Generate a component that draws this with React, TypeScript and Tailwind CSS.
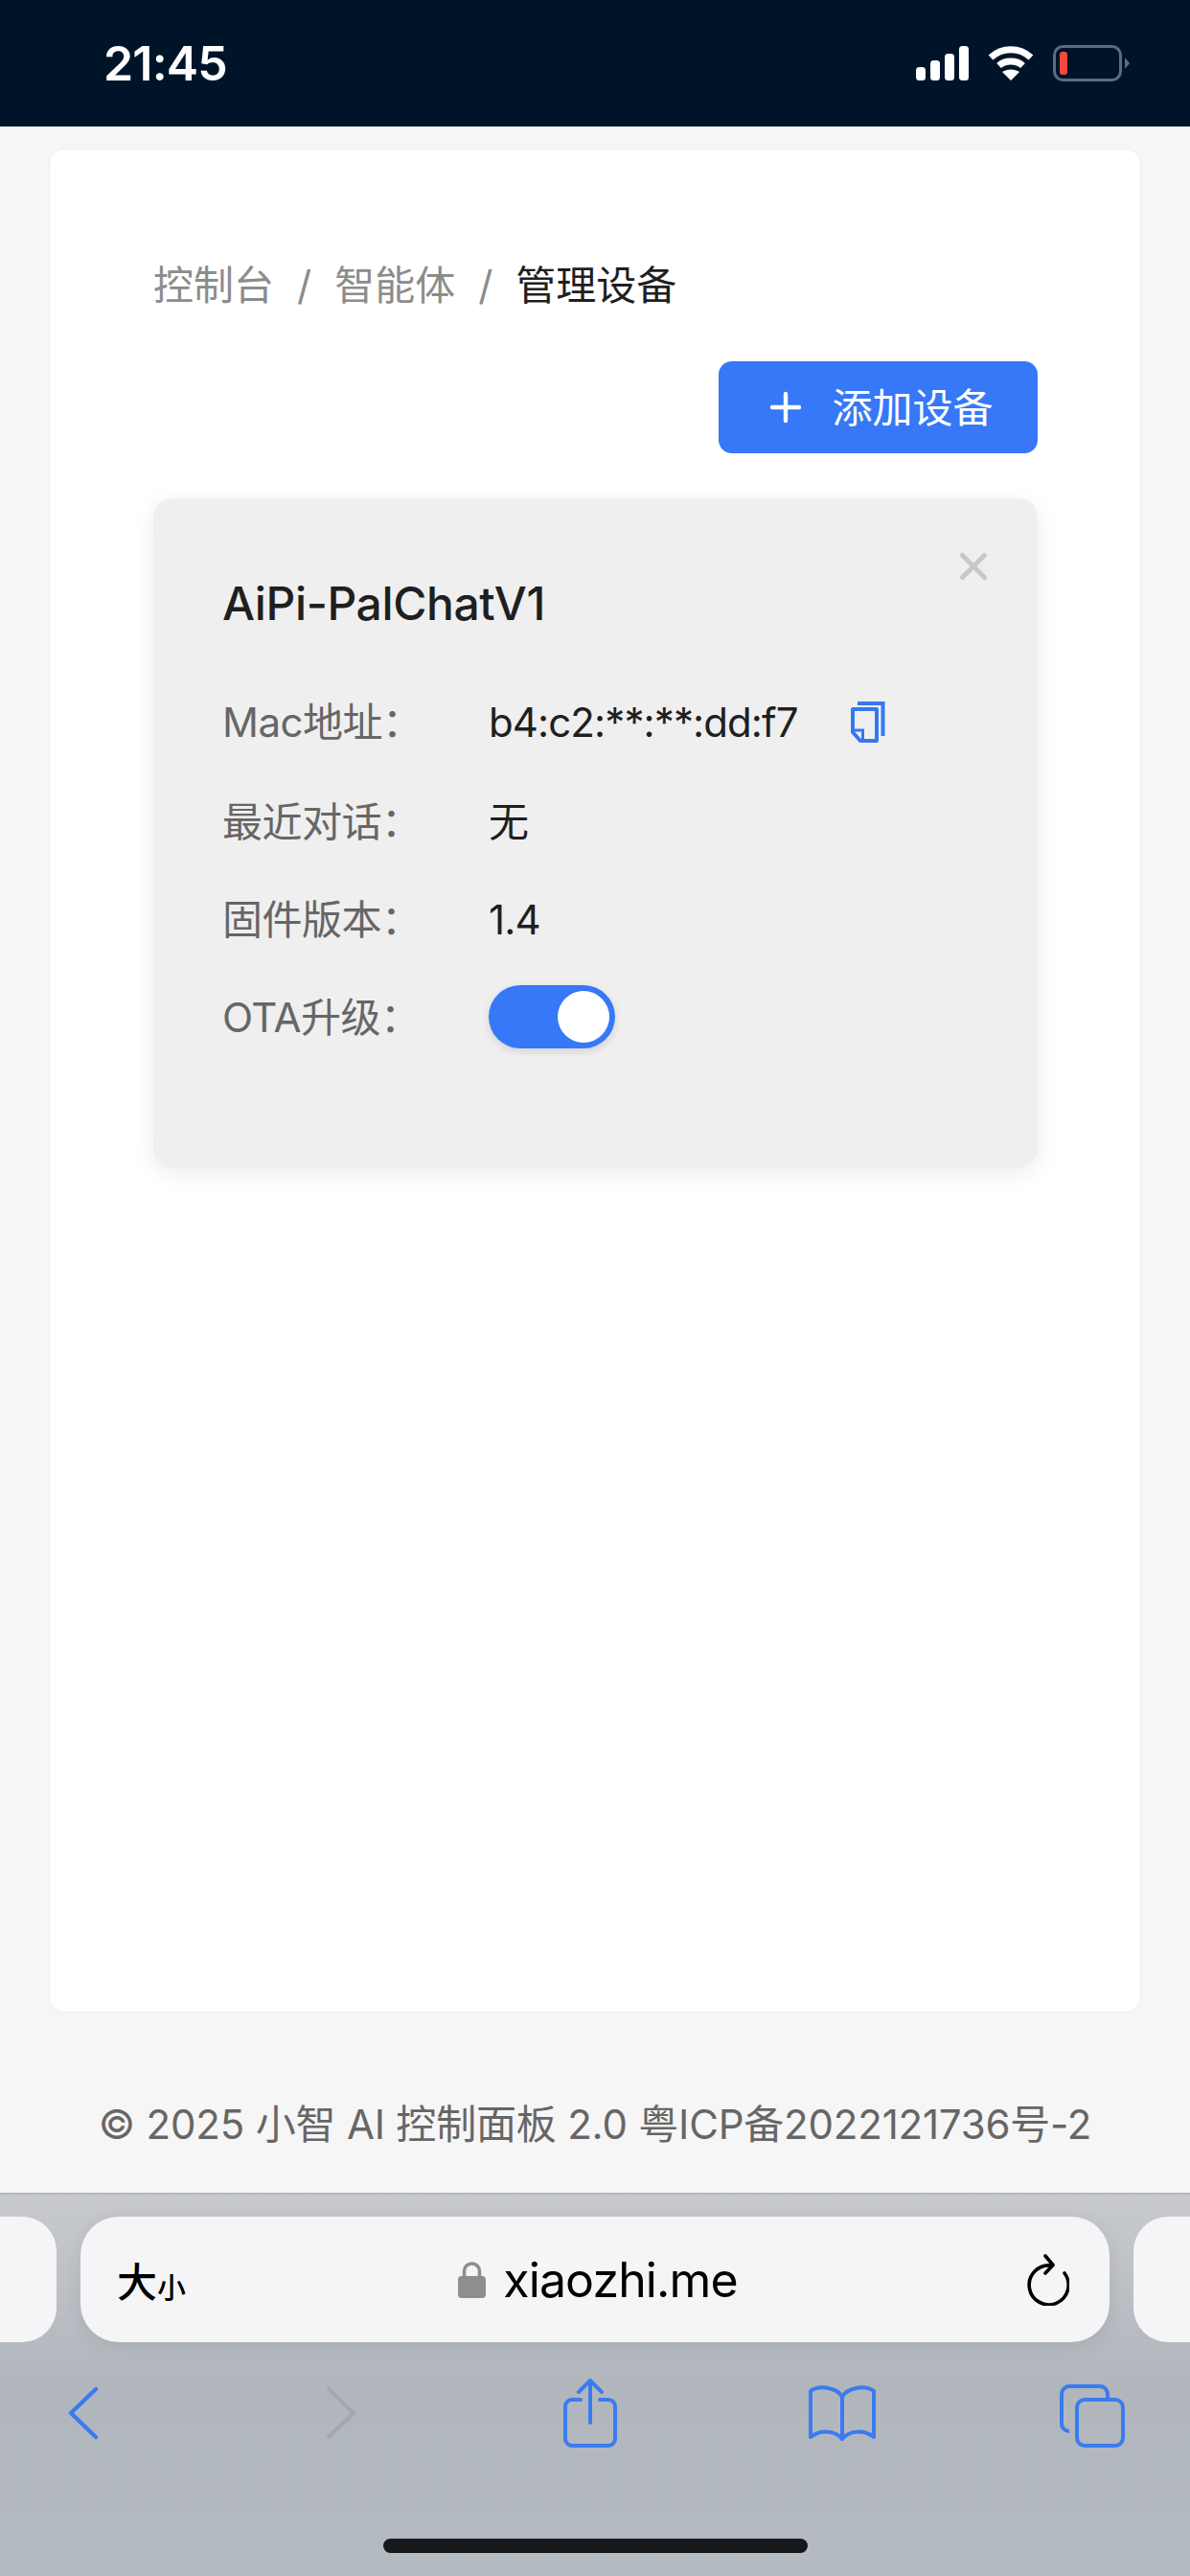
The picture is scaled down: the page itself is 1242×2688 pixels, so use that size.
import { Plus, X } from 'lucide-react';

const FONT = 'font-["Inter","Noto_Sans_CJK_SC",sans-serif]';

// Status bar glyphs
const SignalIcon = () => (
  <svg width="55" height="36" viewBox="0 0 55 36" fill="#fff">
    <rect x="0" y="22" width="10" height="14" rx="3.5" />
    <rect x="15" y="15" width="10" height="21" rx="3.5" />
    <rect x="30" y="8" width="10" height="28" rx="3.5" />
    <rect x="45" y="0" width="10" height="36" rx="3.5" />
  </svg>
);

const WifiIcon = () => (
  <svg width="48" height="36" viewBox="0 0 48 36" fill="none" stroke="#fff" strokeWidth="7">
    <path d="M3 12 C15 1 33 1 45 12" />
    <path d="M11.5 20.5 C18 14.5 30 14.5 36.5 20.5" />
    <path d="M24 36 L15 27 C20 23.5 28 23.5 33 27 Z" fill="#fff" stroke="none" />
  </svg>
);

const BatteryIcon = () => (
  <svg width="80" height="38" viewBox="0 0 80 38" fill="none">
    <rect x="1.5" y="1.5" width="69" height="35" rx="9" stroke="#5c6b80" strokeWidth="3" />
    <rect x="7" y="7" width="8" height="24" rx="3" fill="#ef4a3f" />
    <path d="M75 13 L80 19 L75 25 Z" fill="#5c6b80" />
  </svg>
);

const CopyIcon = () => (
  <svg width="36" height="43" viewBox="0 0 36 43" fill="none" stroke="#3678f0" strokeWidth="4">
    <path d="M7 2 H33.5 V36" />
    <path d="M2 8 H27 V41 H10 L2 32 Z" strokeLinejoin="round" />
    <path d="M2 30 H12.5 V40" strokeWidth="3" />
  </svg>
);

const ReloadIcon = () => (
  <svg width="46" height="54" viewBox="0 0 46 54" fill="none" stroke="#000" strokeWidth="3.6" strokeLinecap="round" strokeLinejoin="round">
    <path d="M27 12 A20.5 20.5 0 1 0 41 20" />
    <path d="M21 2 L29 11.5 L21 20" />
  </svg>
);

const LockIcon = () => (
  <svg width="33" height="38" viewBox="0 0 33 38">
    <path d="M8.5 17 V10 A8 8 0 0 1 24.5 10 V17" fill="none" stroke="#8e8e90" strokeWidth="3.6" />
    <rect x="2" y="15" width="29" height="23" rx="4" fill="#8e8e90" />
  </svg>
);

const ChevronIcon = ({ flip, color }: { flip?: boolean; color: string }) => (
  <svg width="32" height="56" viewBox="0 0 32 56" fill="none" className={flip ? 'rotate-180' : ''}>
    <path d="M29 3 L3 28 L29 53" stroke={color} strokeWidth="4.4" strokeLinecap="round" strokeLinejoin="round" />
  </svg>
);

const ShareIcon = () => (
  <svg width="56" height="72" viewBox="0 0 56 72" fill="none" stroke="#3a7bf0" strokeWidth="4" strokeLinecap="round" strokeLinejoin="round">
    <path d="M18 22 H9 A7 7 0 0 0 2 29 V63 A7 7 0 0 0 9 70 H47 A7 7 0 0 0 54 63 V29 A7 7 0 0 0 47 22 H38" />
    <path d="M28 46 V3" />
    <path d="M16 14 L28 2 L40 14" />
  </svg>
);

const BookIcon = () => (
  <svg width="70" height="58" viewBox="0 0 70 58" fill="none" stroke="#3a7bf0" strokeWidth="4" strokeLinecap="round" strokeLinejoin="round">
    <path d="M35 12 C30 3 12 -1 2 6 V54 C12 46 28 47 35 56 C42 47 58 46 68 54 V6 C58 -1 40 3 35 12 Z" />
    <path d="M35 12 V56" />
  </svg>
);

const TabsIcon = () => (
  <svg width="68" height="66" viewBox="0 0 68 66" fill="none" stroke="#3a7bf0" strokeWidth="4" strokeLinejoin="round">
    <path d="M10 49 A8 8 0 0 1 2 41 V10 A8 8 0 0 1 10 2 H42 A8 8 0 0 1 50 10 V16" />
    <rect x="18" y="16" width="48" height="48" rx="8" />
  </svg>
);

const DETAIL_ROWS = [
  { label: 'Mac地址：', value: 'b4:c2:**:**:dd:f7', height: 'h-[106px]' },
  { label: '最近对话：', value: '无', height: 'h-[102px]' },
  { label: '固件版本：', value: '1.4', height: 'h-[102px]' },
];

export default function App() {
  return (
    <div className={`${FONT} flex h-[2688px] w-[1242px] flex-col overflow-hidden bg-[#f6f6f6]`}>
      {/* Status bar */}
      <div className="flex h-[132px] shrink-0 items-center justify-between bg-[#001429] pl-[108px] pr-[63px]">
        <span className="text-[50px] font-semibold tracking-[-0.8px] text-white">21:45</span>
        <div className="flex items-center gap-5">
          <SignalIcon />
          <WifiIcon />
          <BatteryIcon />
        </div>
      </div>

      {/* Panel */}
      <div className="flex-1 px-[51px] pt-[23px]">
        <div className="h-[1945px] rounded-2xl border border-[#f0f0f0] bg-white pl-[108px] pr-[107px] pt-[114px]">
          <div className="flex h-[54px] items-center text-[42px] text-[#8c8c8c]">
            <span>控制台</span>
            <span className="mx-6">/</span>
            <span>智能体</span>
            <span className="mx-6">/</span>
            <span className="text-[#1f1f1f]">管理设备</span>
          </div>

          <div className="mt-[53px] flex justify-end">
            <button className="flex h-[96px] w-[333px] items-center justify-center gap-[24px] rounded-[14px] bg-[#3678f7] text-[42px] text-white">
              <Plus size={48} strokeWidth={2.2} />
              <span>添加设备</span>
            </button>
          </div>

          {/* Device card */}
          <div className="relative mt-[47px] h-[698px] rounded-[20px] bg-[#efefef] pl-[72px] pt-[78px] shadow-[0_6px_24px_rgba(0,0,0,0.08)]">
            <button className="absolute right-[44px] top-[48px] text-[#c8c8c8]">
              <X size={46} strokeWidth={2.6} />
            </button>
            <h3 className="text-[48px] font-medium leading-[64px] tracking-[-0.4px] text-[#1f1f1f]">AiPi-PalChatV1</h3>

            <div className="mt-[38px]">
              {DETAIL_ROWS.map((row, index) => (
                <div key={row.label} className={`flex items-center ${row.height}`}>
                  <span className="w-[278px] text-[42px] tracking-[-0.5px] text-[#666]">{row.label}</span>
                  <span className="text-[42px] tracking-[-0.9px] text-[#1f1f1f]">{row.value}</span>
                  {index === 0 && (
                    <span className="ml-[55px]">
                      <CopyIcon />
                    </span>
                  )}
                </div>
              ))}
              <div className="flex h-[102px] items-center">
                <span className="w-[278px] text-[42px] tracking-[-0.5px] text-[#666]">OTA升级：</span>
                <div className="flex h-[66px] w-[132px] items-center justify-end rounded-full bg-[#3678f7] pr-[6px] shadow-[0_3px_8px_rgba(0,0,0,0.12)]">
                  <div className="h-[54px] w-[54px] rounded-full bg-white" />
                </div>
              </div>
            </div>
          </div>
        </div>

        <p className="mt-[90px] whitespace-nowrap text-center text-[42px] leading-[54px] tracking-[-0.2px] text-[#666]">
          © 2025 小智 AI 控制面板 2.0 粤ICP备2022121736号-2
        </p>
      </div>

      {/* Browser toolbar */}
      <div className="h-[400px] shrink-0 border-t-2 border-[#b4b6ba] bg-gradient-to-b from-[#c8cacd] via-[#b1b6bd] to-[#b5bbc2] pt-[23px]">
        <div className="flex gap-[25px]">
          <div className="h-[131px] w-[59px] shrink-0 rounded-r-[36px] bg-[#f5f5f7]" />
          <div className="flex h-[131px] w-[1074px] shrink-0 items-center justify-between rounded-[40px] bg-[#f5f5f7] pl-[38px] pr-[42px] shadow-[0_4px_20px_rgba(0,0,0,0.08)]">
            <div className="flex w-[110px] items-end font-['Noto_Sans_CJK_SC',sans-serif] text-black">
              <span className="text-[42px] font-medium leading-none">大</span>
              <span className="text-[30px] font-medium leading-none">小</span>
            </div>
            <div className="ml-[8px] flex items-center gap-[16px]">
              <LockIcon />
              <span className="text-[50px] leading-none tracking-[-0.9px] text-black">xiaozhi.me</span>
            </div>
            <div className="flex w-[110px] justify-end">
              <ReloadIcon />
            </div>
          </div>
          <div className="h-[131px] w-[59px] shrink-0 rounded-l-[36px] bg-[#f5f5f7]" />
        </div>

        <div className="mt-[38px] flex h-[72px] items-center">
          <div className="ml-[-43px] flex w-[260px] shrink-0 justify-center">
            <ChevronIcon color="#3a7bf0" />
          </div>
          <div className="ml-[9px] flex w-[260px] shrink-0 justify-center">
            <ChevronIcon flip color="#a3a8ae" />
          </div>
          <div className="flex w-[260px] shrink-0 justify-center">
            <ShareIcon />
          </div>
          <div className="ml-[3px] flex w-[260px] shrink-0 justify-center">
            <BookIcon />
          </div>
          <div className="ml-[1px] mt-[5px] flex w-[260px] shrink-0 justify-center">
            <TabsIcon />
          </div>
        </div>

        <div className="mx-auto mt-[95px] h-[15px] w-[443px] rounded-full bg-[#16181b]" />
      </div>
    </div>
  );
}
